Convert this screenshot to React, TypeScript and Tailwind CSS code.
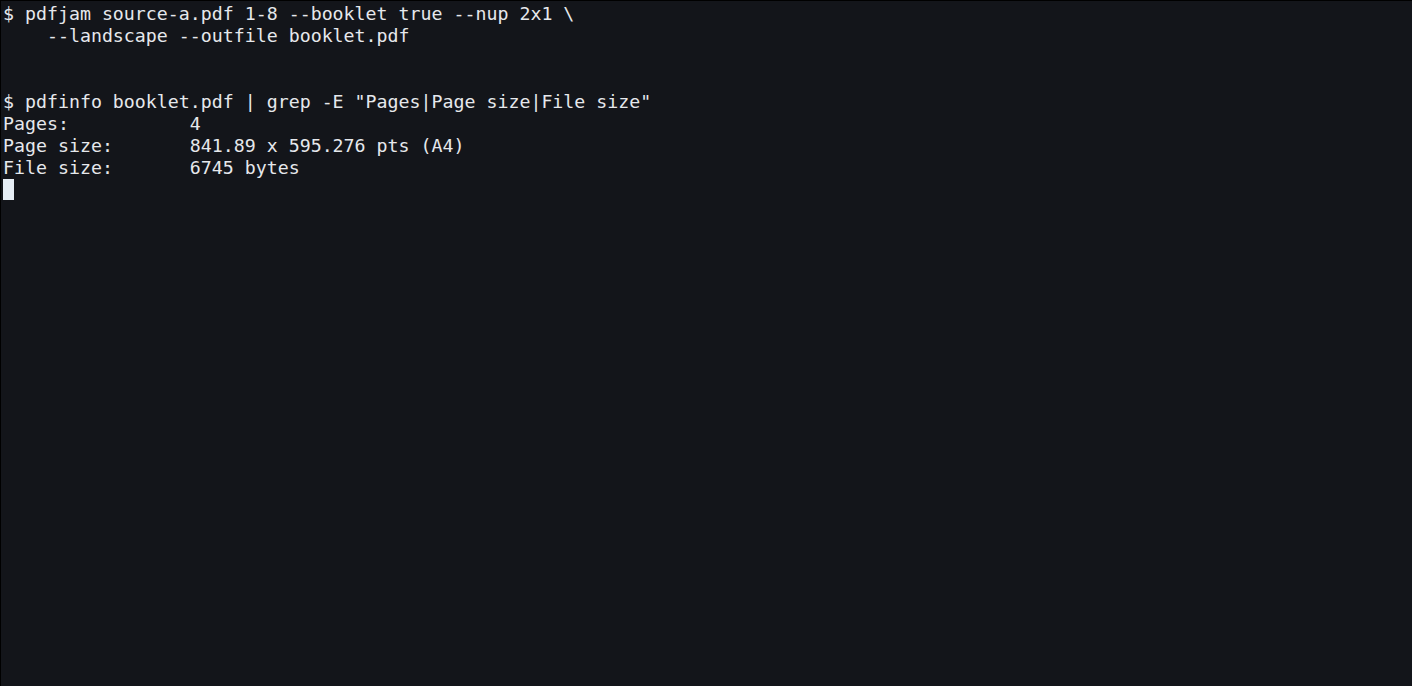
export default function App() {
    const lines = [
        "$ pdfjam source-a.pdf 1-8 --booklet true --nup 2x1 \\",
        "    --landscape --outfile booklet.pdf",
        "",
        "",
        "$ pdfinfo booklet.pdf | grep -E \"Pages|Page size|File size\"",
        "Pages:           4",
        "Page size:       841.89 x 595.276 pts (A4)",
        "File size:       6745 bytes",
    ];

    return (
        <div className="w-[1412px] h-[686px] bg-[#13151a] border-t border-l border-black overflow-hidden">
            <div className="pt-[2px] pl-[2px] font-['DejaVu_Sans_Mono',monospace] text-[18.25px] leading-[22px] text-[#e6e8ec]">
                {lines.map((line, i) => (
                    <div key={i} className="h-[22px] whitespace-pre">{line}</div>
                ))}
                {/* cursor */}
                <div className="h-[22px]">
                    <span className="inline-block w-[11px] h-[21px] bg-[#e6eef5]"/>
                </div>
            </div>
        </div>
    );
}
